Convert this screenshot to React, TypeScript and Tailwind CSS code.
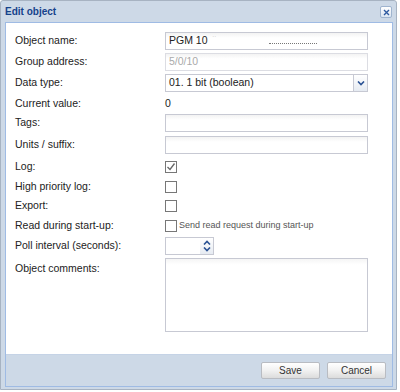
const font = "font-['Liberation_Sans',Arial,sans-serif]";

const Label = ({ children }: { children: React.ReactNode }) => (
  <div className="w-[150px] shrink-0 text-[10.5px] text-[#222]">{children}</div>
);

const TextBox = ({ value = "", disabled = false }: { value?: React.ReactNode; disabled?: boolean }) => (
  <div
    className={`w-[203px] h-[18px] border flex items-center px-[3px] text-[10.5px] bg-gradient-to-b from-[#f3f3f3] to-white to-[30%] ${
      disabled ? "border-[#dcdde3] text-[#aaa]" : "border-[#c7c9d3] text-[#222]"
    }`}
  >
    {value}
  </div>
);

const Check = ({ checked = false }: { checked?: boolean }) => (
  <div className="w-[12px] h-[12px] border border-[#777] bg-white flex items-center justify-center">
    {checked && (
      <svg width="10" height="10" viewBox="0 0 10 10">
        <path d="M1.5 5 L4 7.5 L8.5 1.5" fill="none" stroke="#666" strokeWidth="1.3" />
      </svg>
    )}
  </div>
);

const Chevron = ({ up = false }: { up?: boolean }) => (
  <svg width="8" height="5" viewBox="0 0 8 5">
    <path d={up ? "M1 4.5 L4 1.5 L7 4.5" : "M1 0.5 L4 3.5 L7 0.5"} fill="none" stroke="#2a5294" strokeWidth="1.6" />
  </svg>
);

const Row = ({ label, children, className = "" }: { label: string; children?: React.ReactNode; className?: string }) => (
  <div className={`flex items-center h-[18px] ${className}`}>
    <Label>{label}</Label>
    {children}
  </div>
);

export default function App() {
  return (
    <div className={`w-[400px] h-[392px] bg-white ${font}`}>
      <div className="w-[397px] h-[390px] border border-[#a7b3c2] rounded-t-[3px] bg-[#cdd9e7] flex flex-col">
        {/* title */}
        <div className="h-[21px] flex items-center justify-between pl-[4px] pr-[4px]">
          <span className="text-[10px] font-bold text-[#15428b]">Edit object</span>
          <div className="w-[12px] h-[12px] mt-[1px] border border-[#9fb4cf] rounded-[2px] bg-gradient-to-b from-white to-[#dbe5f1] flex items-center justify-center">
            <svg width="7" height="7" viewBox="0 0 7 7">
              <path d="M1 1 L6 6 M6 1 L1 6" stroke="#2e5aa0" strokeWidth="1.4" />
            </svg>
          </div>
        </div>

        {/* frame */}
        <div className="ml-[4px] w-[388px] h-[365px] border border-[#9fbbe4] flex flex-col">
          <div className="h-[332px] bg-white border-b border-[#c5d3e6] pl-[9px] pt-[9px] flex flex-col">
            <Row label="Object name:">
              <TextBox
                value={
                  <span className="flex items-center w-full">
                    <span>PGM 10</span>
                    <span className="ml-[5px] -mt-[6px] text-[6px] text-[#999]">˙˙</span>
                    <span className="ml-[52px] mt-[3px] w-[48px] h-[2px] border-b border-dotted border-[#777]" />
                  </span>
                }
              />
            </Row>
            <Row label="Group address:" className="mt-[3px]">
              <TextBox value="5/0/10" disabled />
            </Row>
            <Row label="Data type:" className="mt-[3px]">
              <div className="w-[203px] h-[18px] border border-[#c7c9d3] flex text-[10.5px] text-[#222]">
                <div className="flex-1 flex items-center px-[3px]">01. 1 bit (boolean)</div>
                <div className="w-[14px] border-l border-[#c7c9d3] bg-gradient-to-b from-white to-[#e6ebf2] flex items-center justify-center">
                  <Chevron />
                </div>
              </div>
            </Row>
            <Row label="Current value:" className="mt-[3px]">
              <span className="text-[10.5px] text-[#222]">0</span>
            </Row>
            <Row label="Tags:" className="mt-[1px]">
              <TextBox />
            </Row>
            <Row label="Units / suffix:" className="mt-[4px]">
              <TextBox />
            </Row>
            <Row label="Log:" className="mt-[3px] h-[19px]">
              <Check checked />
            </Row>
            <Row label="High priority log:" className="mt-[1px] h-[19px]">
              <Check />
            </Row>
            <Row label="Export:" className="mt-[0px] h-[20px]">
              <Check />
            </Row>
            <Row label="Read during start-up:" className="mt-[0px] h-[19px]">
              <Check />
              <span className="ml-[2px] text-[9px] text-[#555]">Send read request during start-up</span>
            </Row>
            <Row label="Poll interval (seconds):" className="mt-[2px]">
              <div className="w-[49px] h-[18px] border border-[#c7c9d3] flex">
                <div className="flex-1 bg-white" />
                <div className="w-[13px] bg-gradient-to-b from-white to-[#e6ebf2] flex flex-col items-center justify-center gap-[2px]">
                  <Chevron up />
                  <Chevron />
                </div>
              </div>
            </Row>
            <div className="flex mt-[3px]">
              <div className="w-[150px] shrink-0 pt-[3px] text-[10.5px] text-[#222]">Object comments:</div>
              <div className="w-[203px] h-[74px] border border-[#c7c9d3] bg-gradient-to-b from-[#f5f5f5] to-white to-[8%]" />
            </div>
          </div>
          <div className="flex-1 flex justify-end items-start pt-[7px] pr-[6px] gap-[7px]">
            <button className="w-[59px] h-[17px] border border-[#b9bcc2] rounded-[2px] bg-gradient-to-b from-white via-[#f1f1f1] to-[#dcdcdc] text-[10px] text-[#333] leading-none">
              Save
            </button>
            <button className="w-[59px] h-[17px] border border-[#b9bcc2] rounded-[2px] bg-gradient-to-b from-white via-[#f1f1f1] to-[#dcdcdc] text-[10px] text-[#333] leading-none">
              Cancel
            </button>
          </div>
        </div>
      </div>
    </div>
  );
}
